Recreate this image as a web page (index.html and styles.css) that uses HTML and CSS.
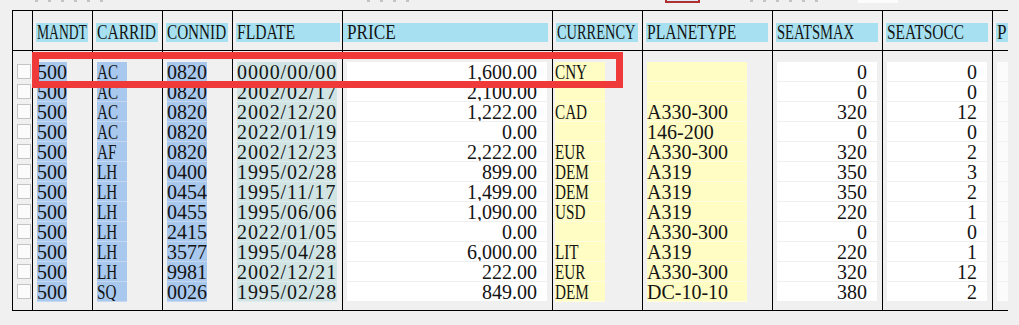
FILE: index.html
```html
<!DOCTYPE html>
<html>
<head>
<meta charset="utf-8">
<title>SFLIGHT</title>
<link rel="stylesheet" href="styles.css">
</head>
<body>
<div class="page">
  <div class="topstrip">
    <span class="specks sa"></span>
    <span class="specks sb"></span>
    <span class="fieldbit"></span>
    <span class="specks sc"></span>
    <span class="whitebit"></span>
  </div>

  <div class="grid">
    <div class="col w-sel">
      <div class="hd"></div>
      <div class="bd">
        <div class="row"><span class="chk"></span></div>
        <div class="row"><span class="chk"></span></div>
        <div class="row"><span class="chk"></span></div>
        <div class="row"><span class="chk"></span></div>
        <div class="row"><span class="chk"></span></div>
        <div class="row"><span class="chk"></span></div>
        <div class="row"><span class="chk"></span></div>
        <div class="row"><span class="chk"></span></div>
        <div class="row"><span class="chk"></span></div>
        <div class="row"><span class="chk"></span></div>
        <div class="row"><span class="chk"></span></div>
        <div class="row"><span class="chk"></span></div>
      </div>
    </div>

    <div class="col w-mandt">
      <div class="hd"><span class="lbl"><span class="cx s68">MANDT</span></span></div>
      <div class="bd">
        <div class="cell key l3">500</div>
        <div class="cell key l3">500</div>
        <div class="cell key l3">500</div>
        <div class="cell key l3">500</div>
        <div class="cell key l3">500</div>
        <div class="cell key l3">500</div>
        <div class="cell key l3">500</div>
        <div class="cell key l3">500</div>
        <div class="cell key l3">500</div>
        <div class="cell key l3">500</div>
        <div class="cell key l3">500</div>
        <div class="cell key l3">500</div>
      </div>
    </div>

    <div class="col w-carrid">
      <div class="hd"><span class="lbl"><span class="cx s78">CARRID</span></span></div>
      <div class="bd">
        <div class="cell key l3"><span class="cx">AC</span></div>
        <div class="cell key l3"><span class="cx">AC</span></div>
        <div class="cell key l3"><span class="cx">AC</span></div>
        <div class="cell key l3"><span class="cx">AC</span></div>
        <div class="cell key l3"><span class="cx">AF</span></div>
        <div class="cell key l3"><span class="cx">LH</span></div>
        <div class="cell key l3"><span class="cx">LH</span></div>
        <div class="cell key l3"><span class="cx">LH</span></div>
        <div class="cell key l3"><span class="cx">LH</span></div>
        <div class="cell key l3"><span class="cx">LH</span></div>
        <div class="cell key l3"><span class="cx">LH</span></div>
        <div class="cell key l3"><span class="cx">SQ</span></div>
      </div>
    </div>

    <div class="col w-connid">
      <div class="hd"><span class="lbl"><span class="cx s76">CONNID</span></span></div>
      <div class="bd">
        <div class="cell key l4">0820</div>
        <div class="cell key l4">0820</div>
        <div class="cell key l4">0820</div>
        <div class="cell key l4">0820</div>
        <div class="cell key l4">0820</div>
        <div class="cell key l4">0400</div>
        <div class="cell key l4">0454</div>
        <div class="cell key l4">0455</div>
        <div class="cell key l4">2415</div>
        <div class="cell key l4">3577</div>
        <div class="cell key l4">9981</div>
        <div class="cell key l4">0026</div>
      </div>
    </div>

    <div class="col w-fldate">
      <div class="hd"><span class="lbl lbl-wide"><span class="cx s78">FLDATE</span></span></div>
      <div class="bd">
        <div class="cell date l10">0000/00/00</div>
        <div class="cell date l10">2002/02/17</div>
        <div class="cell date l10">2002/12/20</div>
        <div class="cell date l10">2022/01/19</div>
        <div class="cell date l10">2002/12/23</div>
        <div class="cell date l10">1995/02/28</div>
        <div class="cell date l10">1995/11/17</div>
        <div class="cell date l10">1995/06/06</div>
        <div class="cell date l10">2022/01/05</div>
        <div class="cell date l10">1995/04/28</div>
        <div class="cell date l10">2002/12/21</div>
        <div class="cell date l10">1995/02/28</div>
      </div>
    </div>

    <div class="col w-price">
      <div class="hd"><span class="lbl lbl-tight"><span class="cx s86">PRICE</span></span></div>
      <div class="bd">
        <div class="cell val num l20">1,600.00</div>
        <div class="cell val num l20">2,100.00</div>
        <div class="cell val num l20">1,222.00</div>
        <div class="cell val num l20">0.00</div>
        <div class="cell val num l20">2,222.00</div>
        <div class="cell val num l20">899.00</div>
        <div class="cell val num l20">1,499.00</div>
        <div class="cell val num l20">1,090.00</div>
        <div class="cell val num l20">0.00</div>
        <div class="cell val num l20">6,000.00</div>
        <div class="cell val num l20">222.00</div>
        <div class="cell val num l20">849.00</div>
      </div>
    </div>

    <div class="col w-curr">
      <div class="hd"><span class="lbl"><span class="cx s72">CURRENCY</span></span></div>
      <div class="bd">
        <div class="cell txt l5 near"><span class="cx">CNY</span></div>
        <div class="cell txt l5 near"></div>
        <div class="cell txt l5 near"><span class="cx">CAD</span></div>
        <div class="cell txt l5 near"></div>
        <div class="cell txt l5 near"><span class="cx">EUR</span></div>
        <div class="cell txt l5 near"><span class="cx">DEM</span></div>
        <div class="cell txt l5 near"><span class="cx">DEM</span></div>
        <div class="cell txt l5 near"><span class="cx">USD</span></div>
        <div class="cell txt l5 near"></div>
        <div class="cell txt l5 near"><span class="cx">LIT</span></div>
        <div class="cell txt l5 near"><span class="cx">EUR</span></div>
        <div class="cell txt l5 near"><span class="cx">DEM</span></div>
      </div>
    </div>

    <div class="col w-plane">
      <div class="hd"><span class="lbl"><span class="cx s78">PLANETYPE</span></span></div>
      <div class="bd">
        <div class="cell txt l10"></div>
        <div class="cell txt l10"></div>
        <div class="cell txt l10">A330-300</div>
        <div class="cell txt l10">146-200</div>
        <div class="cell txt l10">A330-300</div>
        <div class="cell txt l10">A319</div>
        <div class="cell txt l10">A319</div>
        <div class="cell txt l10">A319</div>
        <div class="cell txt l10">A330-300</div>
        <div class="cell txt l10">A319</div>
        <div class="cell txt l10">A330-300</div>
        <div class="cell txt l10">DC-10-10</div>
      </div>
    </div>

    <div class="col w-smax">
      <div class="hd"><span class="lbl"><span class="cx s73">SEATSMAX</span></span></div>
      <div class="bd">
        <div class="cell val num l10">0</div>
        <div class="cell val num l10">0</div>
        <div class="cell val num l10">320</div>
        <div class="cell val num l10">0</div>
        <div class="cell val num l10">320</div>
        <div class="cell val num l10">350</div>
        <div class="cell val num l10">350</div>
        <div class="cell val num l10">220</div>
        <div class="cell val num l10">0</div>
        <div class="cell val num l10">220</div>
        <div class="cell val num l10">320</div>
        <div class="cell val num l10">380</div>
      </div>
    </div>

    <div class="col w-socc">
      <div class="hd"><span class="lbl"><span class="cx s77">SEATSOCC</span></span></div>
      <div class="bd">
        <div class="cell val num l10">0</div>
        <div class="cell val num l10">0</div>
        <div class="cell val num l10">12</div>
        <div class="cell val num l10">0</div>
        <div class="cell val num l10">2</div>
        <div class="cell val num l10">3</div>
        <div class="cell val num l10">2</div>
        <div class="cell val num l10">1</div>
        <div class="cell val num l10">0</div>
        <div class="cell val num l10">1</div>
        <div class="cell val num l10">12</div>
        <div class="cell val num l10">2</div>
      </div>
    </div>

    <div class="col w-p">
      <div class="hd"><span class="lbl lbl-open"><span class="cx s86">P</span></span></div>
      <div class="bd">
        <div class="cell pale lp"></div>
        <div class="cell pale lp"></div>
        <div class="cell pale lp"></div>
        <div class="cell pale lp"></div>
        <div class="cell pale lp"></div>
        <div class="cell pale lp"></div>
        <div class="cell pale lp"></div>
        <div class="cell pale lp"></div>
        <div class="cell pale lp"></div>
        <div class="cell pale lp"></div>
        <div class="cell pale lp"></div>
        <div class="cell pale lp"></div>
      </div>
    </div>
  </div>

  <div class="mark"></div>
</div>
</body>
</html>
```

FILE: styles.css
```css
* { box-sizing: border-box; }
html, body { margin: 0; padding: 0; }
body {
  background: #f0f0f0;
  font-family: "Liberation Serif", "Times New Roman", serif;
  font-size: 20px;
  color: #141414;
  width: 1019px;
  height: 325px;
  overflow: hidden;
}
.page { position: relative; height: 325px; }

/* remnants of the line above (cut off) */
.topstrip { display: flex; align-items: flex-start; height: 10px; }
.specks {
  display: block;
  height: 2px;
  background: repeating-linear-gradient(90deg, #c4c4c4 0 3px, transparent 3px 13px);
}
.sa { margin-left: 35px; width: 75px; }
.sb { margin-left: 257px; width: 50px; }
.fieldbit {
  display: block;
  margin-left: 248px;
  width: 35px;
  height: 3px;
  border: 2px solid #b03030;
  border-top: 0;
  background: #dce9f6;
}
.sc { margin-left: 50px; width: 75px; }
.whitebit {
  display: block;
  margin-left: 33px;
  width: 40px;
  height: 3px;
  background: #fcfcfc;
}

/* grid */
.grid {
  display: flex;
  align-items: flex-start;
  width: 996px;
  margin-left: 12px;
  border-top: 1px solid #000;
  border-bottom: 1px solid #000;
}
.col {
  display: flex;
  flex-direction: column;
  border-left: 1px solid #000;
  flex: none;
}
.w-sel { width: 20px; }
.w-mandt { width: 60px; }
.w-carrid { width: 70px; }
.w-connid { width: 70px; }
.w-fldate { width: 110px; }
.w-price { width: 210px; }
.w-curr { width: 90px; }
.w-plane { width: 130px; }
.w-smax { width: 110px; }
.w-socc { width: 110px; }
.w-p { width: 16px; }

.hd {
  height: 40px;
  padding-top: 12px;
  border-bottom: 1px solid #000;
}
.lbl {
  display: block;
  height: 19px;
  line-height: 19px;
  margin: 0 4px 0 3px;
  padding-left: 1px;
  background: #a7e1f1;
  white-space: nowrap;
  color: #141414;
}
.lbl-tight { margin-left: 0; padding-left: 4px; }
.lbl-wide { margin-right: 2px; }
.lbl-open { margin-right: 0; }

.cx {
  display: inline-block;
  transform: scaleX(0.76);
  transform-origin: 0 50%;
}
.lbl .cx { margin-right: -40px; }
.s68 { transform: scaleX(0.68); }
.s72 { transform: scaleX(0.72); }
.s73 { transform: scaleX(0.73); }
.s76 { transform: scaleX(0.76); }
.s77 { transform: scaleX(0.77); }
.s78 { transform: scaleX(0.78); }
.s86 { transform: scaleX(0.86); }

.bd { padding: 11px 0 8px; }
.row { height: 20px; padding: 2px 0 0 4px; }

.chk {
  display: block;
  width: 14px;
  height: 15px;
  background: #fbfbfb;
  border: 1px solid #c4c4c4;
}

.cell {
  height: 20px;
  line-height: 20px;
  margin-left: 4px;
  white-space: nowrap;
  overflow: hidden;
}
.near { margin-left: 2px; }
.l3 { width: 30px; }
.l4 { width: 40px; }
.l5 { width: 50px; }
.l10 { width: 100px; }
.l20 { width: 200px; }
.lp { width: 11px; }

.key { background: #a9c8ee; border-bottom: 1px solid #c4d8f3; }
.date { background: #d0e4e4; border-bottom: 1px solid #dfeced; letter-spacing: 0.9px; }
.txt { background: #fffcc4; border-bottom: 1px solid #fffde0; }
.val { background: #ffffff; border-bottom: 1px solid #efefef; }
.pale { background: #fbfbfb; border-bottom: 1px solid #f2f2f2; }
.num { text-align: right; padding-right: 10px; }

/* red highlight drawn over the first row */
.mark {
  position: absolute;
  left: 32px;
  top: 52px;
  width: 591px;
  height: 36px;
  border: 7px solid #f03a3a;
}
```
